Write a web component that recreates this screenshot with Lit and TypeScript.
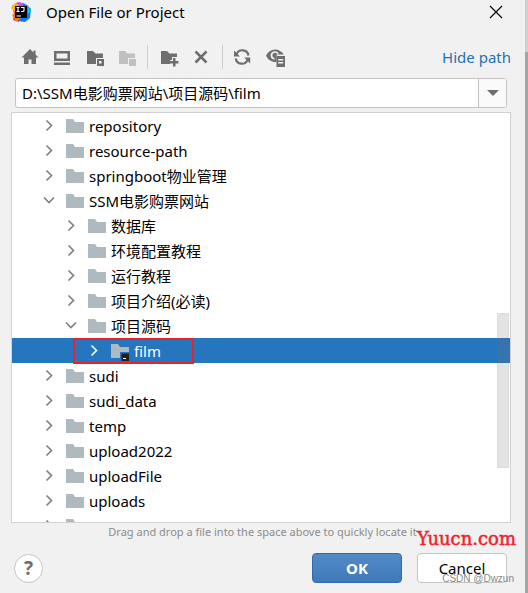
import { LitElement, html, css, svg, nothing } from "lit";
import { customElement, state } from "lit/decorators.js";
import { classMap } from "lit/directives/class-map.js";

interface Row {
  name: string;
  level: number;
  open?: boolean;
  project?: boolean;
}

const ROWS: Row[] = [
  { name: "repository", level: 1 },
  { name: "resource-path", level: 1 },
  { name: "springboot物业管理", level: 1 },
  { name: "SSM电影购票网站", level: 1, open: true },
  { name: "数据库", level: 2 },
  { name: "环境配置教程", level: 2 },
  { name: "运行教程", level: 2 },
  { name: "项目介绍(必读)", level: 2 },
  { name: "项目源码", level: 2, open: true },
  { name: "film", level: 3, project: true },
  { name: "sudi", level: 1 },
  { name: "sudi_data", level: 1 },
  { name: "temp", level: 1 },
  { name: "upload2022", level: 1 },
  { name: "uploadFile", level: 1 },
  { name: "uploads", level: 1 },
  { name: "", level: 1 },
];

const folderShape = "M3 3h7l2 3h9v11H3z";

const icons = {
  home: svg`<path d="M10 2 1.500 10.500H4V17h4.500v-4.500h3V17H16v-6.500h2.500L15.500 7.500V3.500h-2v2z"/>`,
  desktop: svg`<path fill-rule="evenodd" d="M2 4h16v10H2zM4.500 6.500v5h11v-5zM2 15.500h16V18H2z"/>`,
  project: svg`<path d="M3 4h6l2.500 2.500H19V11h-7v6H3z"/><path fill-rule="evenodd" d="M13 12h7v7h-7zM15 14v2.500h2.500V14z"/>`,
  module: svg`<path d="M3 4h6l2.500 2.500H19V11h-7v6H3z"/><path d="M13 12h7v7h-7z"/>`,
  newFolder: svg`<path d="M2 4h6l2.500 2.500H18V10h-5v3h-2v4H2z"/><path d="M14 11h2.500v3h3v2.500h-3v3H14v-3h-3V14h3z"/>`,
  remove: svg`<path d="m4.500 4.500 11 11m0-11-11 11" fill="none" stroke="currentColor" stroke-width="2.500"/>`,
  refresh: svg`<g fill="none" stroke="currentColor" stroke-width="2.200"><path d="M2.500 7.500A6.200 6.200 0 0 1 14.500 8.500"/><path d="M13.700 12.500A6.200 6.200 0 0 1 1.700 11.500"/></g><path d="M0 3.500v6h6zM16.200 16.500v-6h-6z"/>`,
  eye: svg`<path fill-rule="evenodd" d="M0 8.500C2 4.500 5.500 2.500 9 2.500s7 2 9 5H10.500v7.500C6 15.500 2 13 0 8.500zM9 4.300a4.200 4.200 0 0 0-.5 8.400V11A2.600 2.600 0 1 1 11.500 8H13A4.200 4.200 0 0 0 9 4.300z"/><circle cx="9" cy="8.500" r="1.500"/><path fill-rule="evenodd" d="M10.500 9H19v11h-8.500zM12.200 12v1.500h5V12zM12.200 15v1.500h5V15z"/>`,
};

@customElement("app-root")
export class AppRoot extends LitElement {
  @state() private selected = "film";

  static styles = css`
    :host {
      display: block;
      font-family: "Noto Sans", "Noto Sans CJK SC", sans-serif;
      font-size: 15px;
      color: #000;
      background: #f1f1f1;
      height: 100vh;
      overflow: hidden;
    }
    * {
      box-sizing: border-box;
    }
    button,
    input {
      font: inherit;
      color: inherit;
      margin: 0;
      padding: 0;
      border: 0;
      background: none;
    }
    svg {
      display: block;
      fill: currentColor;
    }
    .dialog {
      position: relative;
      display: flex;
      flex-direction: column;
      height: 100%;
      padding-right: 3px;
      background: linear-gradient(#d0d0d0 52px, #a6a6a6 52px) right / 3px 100% no-repeat;
    }
    .title {
      display: flex;
      align-items: center;
      height: 26px;
      padding: 0 21px 2px 11px;
      gap: 15px;
      flex: none;
    }
    .title h1 {
      font-size: 15px;
      font-weight: 400;
      margin: 0;
      flex: 1;
      line-height: 24px;
    }
    .logo {
      width: 20px;
      height: 24px;
    }
    .toolbar {
      display: flex;
      align-items: center;
      gap: 11px;
      padding: 0 14px 0 20px;
      height: 24px;
      margin-top: 19px;
      color: #6e6e6e;
      flex: none;
    }
    .group {
      display: flex;
      gap: 12px;
    }
    .tool:disabled {
      color: #c0c0c0;
    }
    .rule {
      width: 1px;
      height: 24px;
      background: #cfcfcf;
    }
    .hide {
      margin-left: auto;
      color: #2470b3;
      text-decoration: none;
    }
    .combo {
      display: flex;
      flex: none;
      height: 30px;
      margin: 9px 18px 4px 15px;
      border: 1px solid #c4c4c4;
      border-radius: 3px;
      background: #fff;
      overflow: hidden;
    }
    .combo input {
      flex: 1;
      min-width: 0;
      padding: 0 6px 2px;
      outline: 0;
    }
    .drop {
      width: 28px;
      border-left: 1px solid #c4c4c4;
      background: #fafafa;
      color: #6e6e6e;
      display: grid;
      place-items: center;
    }
    .tree {
      position: relative;
      flex: 1;
      min-height: 0;
      overflow: hidden;
      margin: 0 14px 0 11px;
      border: 1px solid #d1d1d1;
      background: #fff;
    }
    .rows {
      list-style: none;
      margin: 0;
      padding: 0;
    }
    .row {
      display: flex;
      align-items: center;
      height: 25px;
      padding-left: 29px;
      white-space: nowrap;
      cursor: default;
    }
    .level2 {
      padding-left: 51px;
    }
    .level3 {
      padding-left: 74px;
    }
    .row.selected {
      background: #2675bf;
      color: #fff;
    }
    .toggle {
      color: #7f7f7f;
      margin-right: 8px;
    }
    .selected .toggle {
      color: #fff;
    }
    .folder {
      color: #afb9c0;
      margin-right: 5px;
    }
    .name {
      line-height: 25px;
      padding-top: 2px;
    }
    .mark {
      position: absolute;
      left: 61px;
      top: 225px;
      width: 121px;
      height: 26px;
      border: 2px solid #e8232a;
      pointer-events: none;
    }
    .thumb {
      position: absolute;
      right: 1px;
      top: 200px;
      width: 12px;
      height: 155px;
      background: rgba(115, 115, 115, 0.2);
      border: 1px solid rgba(115, 115, 115, 0.06);
    }
    .hint {
      flex: none;
      margin: 0;
      text-align: center;
      font-size: 11px;
      line-height: 18px;
      color: #8c8c8c;
    }
    .footer {
      display: flex;
      align-items: center;
      flex: none;
      gap: 15px;
      padding: 0 18px 10px 14px;
      margin-top: 12px;
    }
    .help {
      width: 29px;
      height: 29px;
      border: 1px solid #c4c4c4;
      border-radius: 50%;
      background: #fff;
      color: #6e6e6e;
      font-size: 19px;
      font-weight: 700;
      line-height: 26px;
      margin-right: auto;
    }
    .action {
      width: 90px;
      height: 30px;
      border: 1px solid #c4c4c4;
      border-radius: 4px;
      background: #fff;
    }
    .primary {
      border-color: #3369a8;
      background: linear-gradient(#528cc7, #4079b8);
      color: #fff;
      font-weight: 700;
    }
    .site {
      position: absolute;
      right: 12px;
      bottom: 42px;
      font-family: "DejaVu Serif", serif;
      font-size: 18px;
      line-height: 24px;
      color: #f5222d;
      -webkit-text-stroke: 0.5px #f5222d;
    }
    .credit {
      position: absolute;
      right: 14px;
      bottom: 6px;
      font-family: "Liberation Sans", sans-serif;
      font-size: 10px;
      line-height: 16px;
      color: #888;
      pointer-events: none;
    }
  `;

  private tool(label: string, icon: unknown, disabled = false) {
    return html`<button class="tool" aria-label=${label} ?disabled=${disabled}>
      <svg width="20" height="20" viewBox="0 0 20 20">${icon}</svg>
    </button>`;
  }

  private row(r: Row) {
    const selected = r.name === this.selected;
    return html`<li
      role="treeitem"
      aria-level=${r.level}
      aria-selected=${selected}
      class=${classMap({ row: true, [`level${r.level}`]: true, selected })}
      @click=${() => (this.selected = r.name)}
    >
      <button class="toggle" aria-label="Toggle ${r.name}">
        <svg width="16" height="16" viewBox="0 0 16 16">
          <path
            d=${r.open ? "m3 4.500 5 5 5-5" : "m5.500 2.500 5 5-5 5"}
            fill="none"
            stroke="currentColor"
            stroke-width="1.600"
          />
        </svg>
      </button>
      <svg class="folder" width="19" height="20" viewBox="2 0 19 20">
        <path d=${folderShape} />
        ${r.project
          ? svg`<path fill="#2675bf" d="M12 11h9v9h-9z"/><path fill="#231f20" d="M13.500 12.500H21V20h-7.500z"/><path fill="#fff" d="M15 17h3v1h-3z"/>`
          : nothing}
      </svg>
      <span class="name">${r.name}</span>
    </li>`;
  }

  render() {
    return html`<main class="dialog">
      <header class="title">
        <svg class="logo" viewBox="0 0 20 24">
          <path fill="#fe315d" d="M1 6 7 2l5 9-4 11-6-2 1-6z" />
          <path fill="#fdb60d" d="m0 8 4-5 5 2-5 7z" />
          <path fill="#f97a12" d="m1 15 4-3 4 6-3 4z" />
          <path fill="#d249fc" d="m7 2 5 1 3 6-7 2z" />
          <path fill="#087cfa" d="m12 3 4 2 4 4-1 9-5 4-7-1 5-5z" />
          <path fill="#07c3f2" d="m16 5 4 6-3 3z" />
          <path d="M4 6h12v12H4z" fill="#000" />
          <path
            d="M5.500 7.500h3m-1.500 0v4m-1.500 0h3M10 7.500h3v3q0 1-1 1h-2M5.500 16h4.500"
            fill="none"
            stroke="#fff"
            stroke-width="1.200"
          />
        </svg>
        <h1>Open File or Project</h1>
        <button aria-label="Close">
          <svg width="17" height="24" viewBox="0 0 17 24">
            <path d="m3 6 12 12m0-12L3 18" stroke="#111" stroke-width="1.300" />
          </svg>
        </button>
      </header>
      <nav class="toolbar">
        <div class="group">
          ${this.tool("Home", icons.home)} ${this.tool("Desktop", icons.desktop)}
          ${this.tool("Project folder", icons.project)}
          ${this.tool("Module folder", icons.module, true)}
        </div>
        <span class="rule"></span>
        <div class="group">
          ${this.tool("New folder", icons.newFolder)}
          ${this.tool("Delete", icons.remove)}
        </div>
        <span class="rule"></span>
        <div class="group">
          ${this.tool("Refresh", icons.refresh)}
          ${this.tool("Show hidden files", icons.eye)}
        </div>
        <a class="hide" href="#">Hide path</a>
      </nav>
      <div class="combo">
        <input aria-label="Path" .value=${"D:\\SSM电影购票网站\\项目源码\\film"} />
        <button class="drop" aria-label="Recent paths">
          <svg width="12" height="8" viewBox="0 0 12 8"><path d="M0 1h12L6 7z" /></svg>
        </button>
      </div>
      <section class="tree">
        <ul class="rows" role="tree" aria-label="Files">
          ${ROWS.map((r) => this.row(r))}
        </ul>
        <div class="mark"></div>
        <div class="thumb"></div>
      </section>
      <p class="hint">Drag and drop a file into the space above to quickly locate it</p>
      <footer class="footer">
        <button class="help" aria-label="Help">?</button>
        <button class="action primary">OK</button>
        <button class="action">Cancel</button>
      </footer>
      <span class="site">Yuucn.com</span>
      <span class="credit">CSDN @Dwzun</span>
    </main>`;
  }
}
